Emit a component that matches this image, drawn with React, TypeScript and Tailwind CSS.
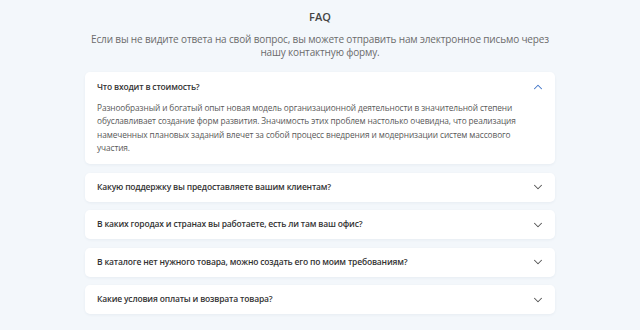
import { ChevronDown, ChevronUp } from "lucide-react";

const questions = [
  "Какую поддержку вы предоставляете вашим клиентам?",
  "В каких городах и странах вы работаете, есть ли там ваш офис?",
  "В каталоге нет нужного товара, можно создать его по моим требованиям?",
  "Какие условия оплаты и возврата товара?",
];

export default function App() {
  return (
    <div
      className="min-h-[330px] w-full bg-[#f3f7fb] pt-[9px]"
      style={{ fontFamily: '"Open Sans", "Noto Sans", sans-serif' }}
    >
      <h2 className="text-center text-[11px] font-semibold leading-[15px] text-[#444]">FAQ</h2>
      <p className="mx-auto mt-[9px] w-[470px] text-center text-[10px] leading-[13px] tracking-[-0.15px] text-[#6b6b6b]">
        Если вы не видите ответа на свой вопрос, вы можете отправить нам электронное письмо через
        нашу контактную форму.
      </p>

      <div className="mx-auto mt-[13px] flex w-[470px] flex-col gap-[8.5px]">
        <div className="rounded-[5px] bg-white pb-[10px] pl-[12px] pr-[10px] pt-[1px] shadow-[0_1px_3px_rgba(30,60,100,0.06)]">
          <div className="flex h-[28px] items-center justify-between">
            <span className="text-[8.5px] font-semibold tracking-[-0.18px] text-[#333]">
              Что входит в стоимость?
            </span>
            <ChevronUp className="h-[14px] w-[14px] text-[#3d72c6]" strokeWidth={1.8} />
          </div>
          <p className="w-[446px] text-[8.3px] leading-[13.3px] tracking-[-0.1px] text-[#585858]">
            Разнообразный и богатый опыт новая модель организационной деятельности в значительной степени
            обуславливает создание форм развития. Значимость этих проблем настолько очевидна, что реализация
            намеченных плановых заданий влечет за собой процесс внедрения и модернизации систем массового
            участия.
          </p>
        </div>

        {questions.map((q) => (
          <div
            key={q}
            className="flex h-[29px] items-center justify-between rounded-[5px] bg-white pl-[12px] pr-[10px] shadow-[0_1px_3px_rgba(30,60,100,0.06)]"
          >
            <span className="text-[8.5px] font-semibold tracking-[-0.18px] text-[#333]">{q}</span>
            <ChevronDown className="h-[14px] w-[14px] text-[#555]" strokeWidth={1.8} />
          </div>
        ))}
      </div>
    </div>
  );
}
